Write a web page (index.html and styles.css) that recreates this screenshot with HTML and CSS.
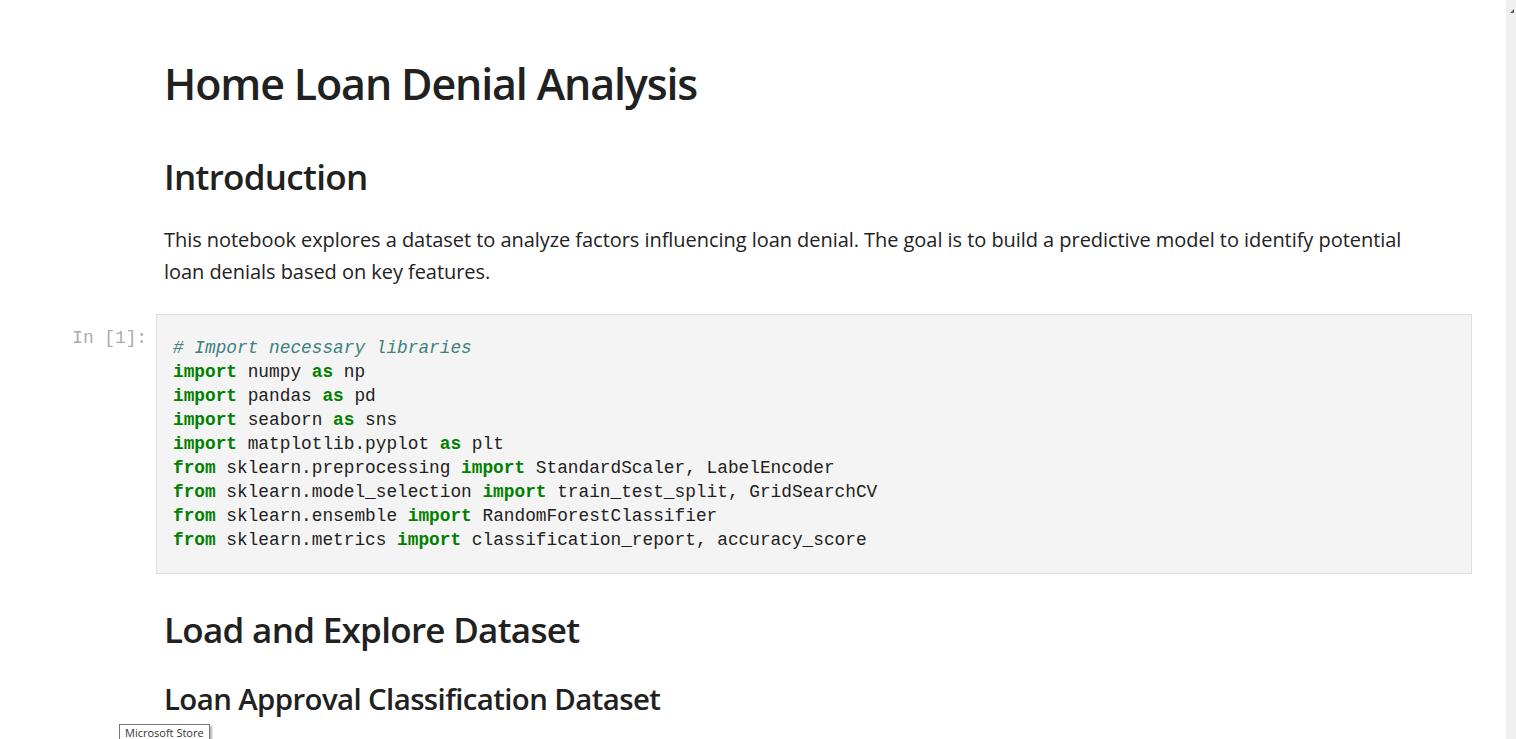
FILE: index.html
```html
<!DOCTYPE html>
<html>
<head>
<meta charset="utf-8">
<link rel="stylesheet" href="styles.css">
</head>
<body>
<div class="page">
  <main class="notebook">
    <div class="cell">
      <div class="prompt"></div>
      <div class="md">
        <h1>Home Loan Denial Analysis</h1>
        <h2>Introduction</h2>
        <p>This notebook explores a dataset to analyze factors influencing loan denial. The goal is to build a predictive model to identify potential loan denials based on key features.</p>
      </div>
    </div>
    <div class="cell code-cell">
      <div class="prompt">In&nbsp;[1]:</div>
      <pre class="code"><span class="c"># Import necessary libraries</span>
<span class="k">import</span> numpy <span class="k">as</span> np
<span class="k">import</span> pandas <span class="k">as</span> pd
<span class="k">import</span> seaborn <span class="k">as</span> sns
<span class="k">import</span> matplotlib.pyplot <span class="k">as</span> plt
<span class="k">from</span> sklearn.preprocessing <span class="k">import</span> StandardScaler, LabelEncoder
<span class="k">from</span> sklearn.model_selection <span class="k">import</span> train_test_split, GridSearchCV
<span class="k">from</span> sklearn.ensemble <span class="k">import</span> RandomForestClassifier
<span class="k">from</span> sklearn.metrics <span class="k">import</span> classification_report, accuracy_score</pre>
    </div>
    <div class="cell">
      <div class="prompt"></div>
      <div class="md">
        <h2 class="h2b">Load and Explore Dataset</h2>
        <h3>Loan Approval Classification Dataset</h3>
      </div>
    </div>
  </main>
  <div class="scrollbar"><span class="arrow"></span></div>
</div>
<div class="tooltip">Microsoft Store</div>
</body>
</html>
```
FILE: styles.css
```css
html, body {
  margin: 0;
  padding: 0;
  height: 100%;
  overflow: hidden;
  background: #ffffff;
}
body {
  font-family: "Open Sans", "Noto Sans", sans-serif;
  color: #212121;
}
.page {
  display: flex;
  height: 100%;
}
.notebook {
  flex: 1;
  padding: 0 34px 0 0;
  min-width: 0;
}
.cell {
  display: flex;
}
.prompt {
  width: 156px;
  flex: none;
  box-sizing: border-box;
  text-align: right;
  padding: 12px 9px 0 0;
  font-family: "Liberation Mono", monospace;
  font-size: 17.8px;
  line-height: 24px;
  color: #ababab;
}
.md {
  flex: 1;
  padding: 0 50px 0 8px;
  min-width: 0;
}
h1 {
  font-size: 43px;
  font-weight: 600;
  margin: 54px 0 0 0;
  line-height: 60px;
  letter-spacing: -1.15px;
}
h2 {
  font-size: 35px;
  font-weight: 600;
  margin: 38px 0 0 0;
  line-height: 50px;
  letter-spacing: -0.7px;
}
p {
  font-size: 20px;
  line-height: 32px;
  margin: 22px 0 26px 0;
  color: #222;
  letter-spacing: -0.05px;
}
.code-cell {
  margin-bottom: 31px;
}
.code {
  flex: 1;
  margin: 0;
  background: #f4f4f4;
  border: 1px solid #dedede;
  padding: 21px 16px 21px 16px;
  font-family: "Liberation Mono", monospace;
  font-size: 17.8px;
  line-height: 24px;
  color: #212121;
}
.k {
  color: #008000;
  font-weight: bold;
}
.c {
  color: #408080;
  font-style: italic;
}
.h2b {
  margin-top: 0;
}
h3 {
  font-size: 29.4px;
  font-weight: 600;
  margin: 24px 0 0 0;
  line-height: 40px;
  letter-spacing: -0.6px;
}
.scrollbar {
  width: 10px;
  flex: none;
  background: #f0f0f0;
  position: relative;
}
.arrow {
  position: absolute;
  top: 9px;
  left: 4px;
  width: 0;
  height: 0;
  border-left: 4px solid transparent;
  border-bottom: 4px solid #606060;
}
.tooltip {
  position: absolute;
  left: 119px;
  top: 724px;
  padding: 1px 5px 3px 5px;
  font-family: "Open Sans", sans-serif;
  font-size: 11px;
  line-height: 14px;
  color: #333;
  background: #fff;
  border: 1px solid #767676;
  box-shadow: 2px 2px 2px rgba(0,0,0,0.3);
}
```
